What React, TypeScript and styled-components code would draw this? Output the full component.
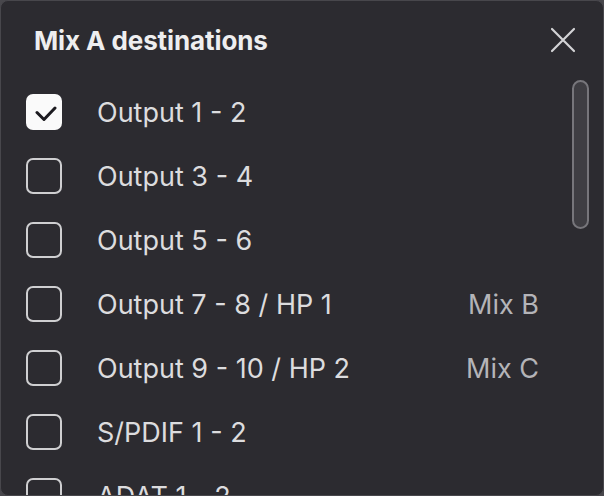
import React from "react";
import styled, { createGlobalStyle } from "styled-components";

const destinations = [
  { label: "Output 1 - 2", checked: true },
  { label: "Output 3 - 4" },
  { label: "Output 5 - 6" },
  { label: "Output 7 - 8 / HP 1", mix: "Mix B" },
  { label: "Output 9 - 10 / HP 2", mix: "Mix C" },
  { label: "S/PDIF 1 - 2" },
  { label: "ADAT 1 - 2" },
  { label: "ADAT 3 - 4" },
];

const GlobalStyle = createGlobalStyle`
  html, body {
    margin: 0;
    padding: 0;
    background: #48474c;
    overflow: hidden;
  }
`;

const Panel = styled.div`
  box-sizing: border-box;
  width: 604px;
  height: 496px;
  background: #2c2b30;
  border: 1px solid #48474c;
  border-radius: 8px;
  overflow: hidden;
  position: relative;
  font-family: Inter, "Noto Sans", sans-serif;
  color: #dcdcde;
`;

const Header = styled.div`
  display: flex;
  align-items: center;
  justify-content: space-between;
  height: 78px;
  padding: 0 27px 0 33px;
`;

const Title = styled.h1`
  margin: 0;
  font-size: 26px;
  font-weight: 700;
  letter-spacing: -0.1px;
  color: #eeeeef;
`;

const CloseButton = styled.button`
  background: none;
  border: none;
  padding: 0;
  width: 26px;
  height: 26px;
  display: flex;
  align-items: center;
  justify-content: center;
  cursor: pointer;
`;

const List = styled.div`
  display: flex;
  flex-direction: column;
  padding: 1px 64px 0 25px;
`;

const Row = styled.label`
  display: flex;
  align-items: center;
  height: 64px;
`;

const Box = styled.span<{ $checked?: boolean }>`
  box-sizing: border-box;
  flex: none;
  width: 36px;
  height: 36px;
  border-radius: 7px;
  border: ${({ $checked }) => ($checked ? "none" : "2.5px solid #cfcfd1")};
  background: ${({ $checked }) => ($checked ? "#fafafa" : "transparent")};
  display: flex;
  align-items: center;
  justify-content: center;
`;

const Label = styled.span`
  flex: 1;
  margin-left: 35px;
  font-size: 27px;
  color: #dcdcde;
`;

const Mix = styled.span`
  font-size: 27px;
  color: #b4b4b8;
`;

const Scrollbar = styled.div`
  position: absolute;
  left: 571px;
  top: 79px;
  width: 17px;
  height: 149px;
  box-sizing: border-box;
  border: 2px solid #77767b;
  border-radius: 9px;
  background: #3f3e43;
`;

const Check = () => (
  <svg width="26" height="26" viewBox="0 0 26 26" fill="none">
    <path
      d="M6 13.5 L13 20.5 L24 9"
      stroke="#1c1b20"
      strokeWidth="3"
      strokeLinecap="round"
      strokeLinejoin="round"
    />
  </svg>
);

const CloseIcon = () => (
  <svg width="26" height="26" viewBox="0 0 26 26" fill="none">
    <path
      d="M2 2 L24 24 M24 2 L2 24"
      stroke="#d4d4d6"
      strokeWidth="2.2"
      strokeLinecap="round"
    />
  </svg>
);

export default function App() {
  return (
    <>
      <GlobalStyle />
      <Panel>
        <Header>
          <Title>Mix A destinations</Title>
          <CloseButton aria-label="Close">
            <CloseIcon />
          </CloseButton>
        </Header>
        <List>
          {destinations.map((d) => (
            <Row key={d.label}>
              <Box $checked={d.checked}>{d.checked && <Check />}</Box>
              <Label>{d.label}</Label>
              {d.mix && <Mix>{d.mix}</Mix>}
            </Row>
          ))}
        </List>
        <Scrollbar />
      </Panel>
    </>
  );
}
